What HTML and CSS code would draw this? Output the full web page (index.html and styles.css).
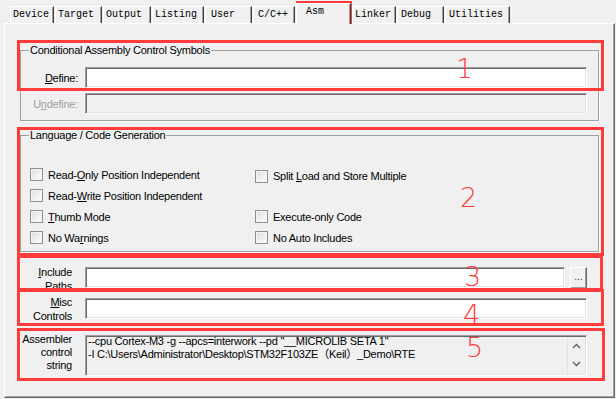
FILE: index.html
```html
<!DOCTYPE html>
<html lang="en">
<head>
    <meta charset="UTF-8">
    <title>Options for Target - Asm</title>
    <link rel="stylesheet" href="styles.css">
</head>
<body>
    <div class="window">
        <!-- Pestañas -->
        <div class="tabs">
            <span class="tab t-device">Device</span>
            <span class="tab t-target">Target</span>
            <span class="tab t-output">Output</span>
            <span class="tab t-listing">Listing</span>
            <span class="tab t-user">User</span>
            <span class="tab t-cpp">C/C++</span>
            <span class="tab t-asm active">Asm</span>
            <span class="tab t-linker">Linker</span>
            <span class="tab t-debug">Debug</span>
            <span class="tab t-util">Utilities</span>
        </div>

        <div class="panel">
            <fieldset class="group group-symbols">
                <legend>Conditional Assembly Control Symbols</legend>
                <div class="field">
                    <label><u>D</u>efine:</label>
                    <div class="edit"></div>
                </div>
                <div class="field disabled">
                    <label>U<u>n</u>define:</label>
                    <div class="edit"></div>
                </div>
            </fieldset>

            <fieldset class="group group-lang">
                <legend>Language / Code Generation</legend>
                <div class="checks">
                    <div class="check"><span class="box"></span><span>Read-<u>O</u>nly Position Independent</span></div>
                    <div class="check nudge"><span class="box"></span><span>Split <u>L</u>oad and Store Multiple</span></div>
                    <div class="check"><span class="box"></span><span>Read-<u>W</u>rite Position Independent</span></div>
                    <div class="check"></div>
                    <div class="check"><span class="box"></span><span><u>T</u>humb Mode</span></div>
                    <div class="check"><span class="box"></span><span>Execute-only Code</span></div>
                    <div class="check"><span class="box"></span><span>No Wa<u>r</u>nings</span></div>
                    <div class="check"><span class="box"></span><span>No Auto Includes</span></div>
                </div>
            </fieldset>

            <div class="row row-include">
                <label><u>I</u>nclude<br>Paths</label>
                <div class="with-button">
                    <div class="edit"></div>
                    <span class="dots">...</span>
                </div>
            </div>

            <div class="row row-misc">
                <label><u>M</u>isc<br>Controls</label>
                <div class="edit"></div>
            </div>

            <div class="row row-asm">
                <label>Assembler<br>control<br>string</label>
                <div class="edit memo">
                    <div class="memo-text">--cpu Cortex-M3 -g --apcs=interwork --pd "__MICROLIB SETA 1"<br>-I C:\Users\Administrator\Desktop\STM32F103ZE（Keil）_Demo\RTE</div>
                    <div class="vscroll">
                        <svg width="9" height="6" viewBox="0 0 9 6"><polyline points="1,5 4.5,1.5 8,5" fill="none" stroke="#606060" stroke-width="1.4"/></svg>
                        <svg width="9" height="6" viewBox="0 0 9 6"><polyline points="1,1 4.5,4.5 8,1" fill="none" stroke="#606060" stroke-width="1.4"/></svg>
                    </div>
                </div>
            </div>
        </div>

        <!-- Marcas rojas encima -->
        <div class="mark mark-tab"></div>
        <div class="mark mark-1"></div>
        <div class="mark mark-2"></div>
        <div class="mark mark-3"></div>
        <div class="mark mark-4"></div>
        <div class="mark mark-5"></div>
        <span class="num num-1">1</span>
        <span class="num num-2">2</span>
        <span class="num num-3">3</span>
        <span class="num num-4">4</span>
        <span class="num num-5">5</span>
    </div>
</body>
</html>
```

FILE: styles.css
```css
body {
    margin: 0;
    background-color: #f0f0f0;
    font-family: "Liberation Sans", "Noto Sans CJK SC", sans-serif;
    font-size: 11px;
    letter-spacing: -0.25px;
    color: #000;
}

.window {
    position: relative;
    width: 616px;
    height: 399px;
    overflow: hidden;
}

u {
    text-decoration-thickness: 1px;
    text-underline-offset: 1px;
}

/* Pestañas */
.tabs {
    display: flex;
    align-items: flex-end;
    height: 23px;
    padding-left: 10px;
    box-sizing: border-box;
}

.tab {
    height: 17px;
    box-sizing: border-box;
    border: 1px solid;
    border-bottom: none;
    border-color: #fff #404040 transparent #fff;
    box-shadow: inset -1px 0 #a0a0a0;
    font-family: "Liberation Mono", monospace;
    font-size: 10px;
    letter-spacing: 0;
    line-height: 16px;
    padding-left: 2px;
    margin-right: 1px;
    white-space: pre;
}

.t-device { width: 44px; }
.t-target { width: 47px; }
.t-output { width: 48px; }
.t-listing { width: 52px; }
.t-user { width: 47px; padding-left: 5px; }
.t-cpp { width: 42px; padding-left: 4px; }
.t-asm { width: 55px; }
.t-linker { width: 44px; }
.t-debug { width: 47px; padding-left: 3px; }
.t-util { width: 65px; padding-left: 3px; }

.tab.active {
    position: relative;
    z-index: 1;
    height: 21px;
    margin-bottom: -1px;
    background-color: #f0f0f0;
    padding-left: 9px;
    line-height: 15px;
}

/* Página de opciones */
.panel {
    margin-left: 4px;
    width: 611px;
    height: 375px;
    box-sizing: border-box;
    border: 1px solid;
    border-color: #fff #696969 #696969 #fff;
    box-shadow: inset -1px -1px 0 #a0a0a0;
    overflow: hidden;
}

.group {
    margin: 0 15px;
    padding: 0;
    border: 1px solid #a0a0a0;
    box-shadow: 1px 1px 0 #fff;
    min-width: 0;
}

.group legend {
    margin-left: 8px;
    padding: 0 1px;
    line-height: 13px;
}

.group-symbols {
    margin-top: 20px;
    padding: 10px 0 6px;
}

.group-lang {
    margin-top: 8px;
    padding: 22px 0 3px;
}

.field {
    display: grid;
    grid-template-columns: 57px 502px;
    column-gap: 7px;
    align-items: center;
    margin-bottom: 5px;
}

.field:last-child {
    margin-bottom: 0;
}

.field label, .row label {
    text-align: right;
}

.edit {
    height: 21px;
    box-sizing: border-box;
    background-color: #fff;
    border: 1px solid;
    border-color: #a0a0a0 #fff #fff #a0a0a0;
    box-shadow: inset 1px 1px 0 #696969, inset -1px -1px 0 #e3e3e3;
}

.disabled label {
    color: #a0a0a0;
}

.disabled .edit {
    background-color: #f0f0f0;
}

/* Casillas */
.checks {
    display: grid;
    grid-template-columns: 225px 225px;
    grid-auto-rows: 21px;
    margin-left: 9px;
}

.check {
    display: flex;
    align-items: center;
    gap: 5px;
}

.check.nudge {
    padding-top: 3px;
}

.box {
    width: 13px;
    height: 13px;
    flex: none;
    box-sizing: border-box;
    border: 1px solid #8e8f8f;
    background: linear-gradient(135deg, #dcdcdc, #fff);
    box-shadow: inset 0 0 0 1px #f4f4f4;
}

/* Filas inferiores */
.row {
    display: grid;
    grid-template-columns: 52px 1fr;
    column-gap: 13px;
    margin: 0 27px 0 15px;
}

.row label {
    line-height: 14px;
}

.row-include {
    margin-top: 15px;
    height: 21px;
}

.row-include label {
    margin-top: -2px;
}

.row-misc {
    margin-top: 10px;
}

.row-misc label {
    margin-top: -3px;
}

.row-asm {
    margin-top: 12px;
}

.row-asm label {
    line-height: 13px;
    margin-top: -2px;
}

.with-button {
    display: flex;
    gap: 5px;
}

.with-button .edit {
    flex: 1;
}

.dots {
    width: 17px;
    height: 22px;
    box-sizing: border-box;
    border: 1px solid;
    border-color: #fff #696969 #696969 #fff;
    box-shadow: inset -1px -1px 0 #a0a0a0;
    text-align: center;
    line-height: 18px;
    color: #4a2a6a;
    font-size: 10px;
    letter-spacing: 0;
}

.memo {
    height: 41px;
    display: flex;
    background-color: #f0f0f0;
}

.memo-text {
    flex: 1;
    margin-top: -1px;
    padding-left: 2px;
    line-height: 13px;
    white-space: nowrap;
    overflow: hidden;
}

.vscroll {
    width: 18px;
    margin: 1px 1px 1px 0;
    border-left: 1px solid #e3e3e3;
    display: flex;
    flex-direction: column;
    justify-content: space-between;
    align-items: center;
    padding: 6px 0 7px;
    box-sizing: border-box;
}

.vscroll svg {
    display: block;
}

/* Marcas rojas */
.mark {
    position: absolute;
    border: 3px solid #ff3b3b;
    box-sizing: border-box;
}

.mark-tab { left: 296px; top: 1px; width: 56px; height: 23px; }
.mark-1 { left: 17px; top: 40px; width: 587px; height: 51px; }
.mark-2 { left: 17px; top: 127px; width: 587px; height: 129px; }
.mark-3 { left: 17px; top: 255px; width: 586px; height: 36px; }
.mark-4 { left: 17px; top: 289px; width: 587px; height: 37px; }
.mark-5 { left: 17px; top: 328px; width: 588px; height: 53px; }

.num {
    position: absolute;
    color: #ff3b3b;
    font-family: "DejaVu Sans", sans-serif;
    font-size: 27px;
    font-weight: 200;
    line-height: 22px;
    letter-spacing: 0;
}

.num-1 { left: 456px; top: 58px; }
.num-2 { left: 460px; top: 187px; }
.num-3 { left: 464px; top: 266px; }
.num-4 { left: 463px; top: 304px; }
.num-5 { left: 466px; top: 337px; }
```
